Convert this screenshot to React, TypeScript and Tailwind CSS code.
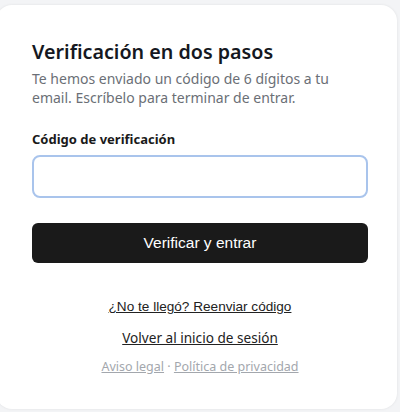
export default function App() {
  return (
    <div className="min-h-[412px] overflow-hidden bg-[#f3f4f6] pt-[5px] font-['Noto_Sans',sans-serif]">
      <div className="-ml-1 w-[401px] rounded-2xl bg-white pb-[32px] pl-9 pr-[29px] pt-[33px] shadow-[0_0_3px_rgba(0,0,0,0.08)]">
        <h1 className="text-[19.7px] font-semibold leading-7 text-[#151821]">Verificación en dos pasos</h1>
        <p className="mt-[3px] text-[14px] leading-[19px] text-[#6b6f76]">
          Te hemos enviado un código de 6 dígitos a tu email. Escríbelo para terminar de entrar.
        </p>

        <label className="mt-[22px] block text-[13px] font-bold leading-5 text-[#1a1a1a]">
          Código de verificación
        </label>
        <input
          type="text"
          inputMode="numeric"
          className="mt-[6px] h-[43px] w-full rounded-lg border-2 border-[#a9c4ec] px-3 text-base outline-none"
        />

        <button className="mt-[25px] h-10 w-full rounded-md bg-[#1a1a1a] font-['Liberation_Sans',sans-serif] text-[15.5px] text-white">
          Verificar y entrar
        </button>

        <div className="mt-[34px] flex flex-col items-center">
          <a href="#" className="font-['Liberation_Sans',sans-serif] text-[13.6px] leading-5 text-[#222] underline">
            ¿No te llegó? Reenviar código
          </a>
          <a href="#" className="mt-[11px] text-[13.6px] leading-5 text-[#222] underline">
            Volver al inicio de sesión
          </a>
          <p className="mt-[9px] text-[12.5px] leading-5 text-[#a3a7ad]">
            <a href="#" className="underline">Aviso legal</a>
            {" · "}
            <a href="#" className="underline">Política de privacidad</a>
          </p>
        </div>
      </div>
    </div>
  );
}
